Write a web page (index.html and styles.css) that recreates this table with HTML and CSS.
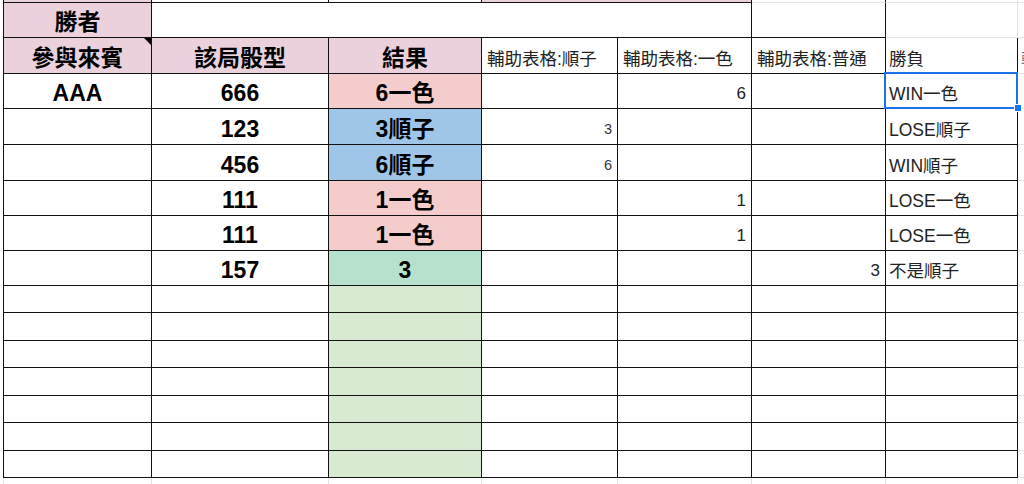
FILE: index.html
```html
<!DOCTYPE html>
<html lang="zh-Hant">
<head>
<meta charset="utf-8">
<title>Sheet</title>
<link rel="stylesheet" href="styles.css">
</head>
<body>
<table class="sheet">
  <colgroup>
    <col class="c1"><col class="c2"><col class="c3"><col class="c4"><col class="c5"><col class="c6"><col class="c7"><col class="c8">
  </colgroup>
  <tr class="r-strip">
    <td class="pk"></td><td></td><td></td><td class="pk" colspan="2"></td><td class="gb"></td><td class="g"></td><td class="g"></td>
  </tr>
  <tr class="r-top">
    <td class="pk b">勝者</td>
    <td colspan="4"></td>
    <td class="gt"></td>
    <td class="g"></td>
    <td class="g"></td>
  </tr>
  <tr class="r-head">
    <td class="pk b note">參與來賓</td>
    <td class="pk b">該局骰型</td>
    <td class="pk b">結果</td>
    <td class="t">輔助表格:順子</td>
    <td class="t">輔助表格:一色</td>
    <td class="t">輔助表格:普通</td>
    <td class="t tw">勝負</td>
    <td class="g t tp">輔助</td>
  </tr>
  <tr class="r-35">
    <td class="b">AAA</td><td class="b">666</td><td class="b rd">6一色</td>
    <td></td><td class="n">6</td><td></td>
    <td class="t tw sel">WIN一色<span class="handle"></span></td><td class="g"></td>
  </tr>
  <tr class="r-36">
    <td></td><td class="b">123</td><td class="b bl">3順子</td>
    <td class="n sm">3</td><td></td><td></td>
    <td class="t tw">LOSE順子</td><td class="g"></td>
  </tr>
  <tr class="r-36">
    <td></td><td class="b">456</td><td class="b bl">6順子</td>
    <td class="n sm">6</td><td></td><td></td>
    <td class="t tw">WIN順子</td><td class="g"></td>
  </tr>
  <tr class="r-35">
    <td></td><td class="b">111</td><td class="b rd">1一色</td>
    <td></td><td class="n">1</td><td></td>
    <td class="t tw">LOSE一色</td><td class="g"></td>
  </tr>
  <tr class="r-35">
    <td></td><td class="b">111</td><td class="b rd">1一色</td>
    <td></td><td class="n">1</td><td></td>
    <td class="t tw">LOSE一色</td><td class="g"></td>
  </tr>
  <tr class="r-35">
    <td></td><td class="b">157</td><td class="b gn">3</td>
    <td></td><td></td><td class="n">3</td>
    <td class="t tw">不是順子</td><td class="g"></td>
  </tr>
  <tr class="r-27"><td></td><td></td><td class="lg"></td><td></td><td></td><td></td><td></td><td class="g"></td></tr>
  <tr class="r-28"><td></td><td></td><td class="lg"></td><td></td><td></td><td></td><td></td><td class="g"></td></tr>
  <tr class="r-27"><td></td><td></td><td class="lg"></td><td></td><td></td><td></td><td></td><td class="g"></td></tr>
  <tr class="r-28"><td></td><td></td><td class="lg"></td><td></td><td></td><td></td><td></td><td class="g"></td></tr>
  <tr class="r-27"><td></td><td></td><td class="lg"></td><td></td><td></td><td></td><td></td><td class="g"></td></tr>
  <tr class="r-28"><td></td><td></td><td class="lg"></td><td></td><td></td><td></td><td></td><td class="g"></td></tr>
  <tr class="r-27"><td></td><td></td><td class="lg"></td><td></td><td></td><td></td><td></td><td class="g"></td></tr>
  <tr class="r-tail"><td class="g"></td><td class="g"></td><td class="g"></td><td class="g"></td><td class="g"></td><td class="g"></td><td class="g"></td><td class="g"></td></tr>
</table>
</body>
</html>
```

FILE: styles.css
```css
html, body {
  margin: 0;
  padding: 0;
  background: #ffffff;
  overflow: hidden;
}

body {
  font-family: "Liberation Sans", "Noto Sans CJK TC", sans-serif;
  color: #222222;
}

.sheet {
  border-collapse: separate;
  border-spacing: 0;
  table-layout: fixed;
  width: 1075px;
  margin-left: 3px;
}

.c1 { width: 149px; }
.c2 { width: 177px; }
.c3 { width: 153px; }
.c4 { width: 136px; }
.c5 { width: 134px; }
.c6 { width: 134px; }
.c7 { width: 132px; }
.c8 { width: 60px; }

.sheet td {
  padding: 0;
  border-right: 1px solid #111111;
  border-bottom: 1px solid #111111;
  white-space: nowrap;
  overflow: hidden;
  vertical-align: bottom;
  font-size: 0;
  line-height: 0;
}

.sheet td:first-child {
  border-left: 1px solid #111111;
}

.r-strip { height: 3px; }
.r-top { height: 35px; }
.r-head { height: 36px; }
.r-35 { height: 35px; }
.r-36 { height: 36px; }
.r-27 { height: 27px; }
.r-28 { height: 28px; }
.r-tail { height: 30px; }

.sheet td.g {
  border-right: 1px solid #e2e3e3;
  border-bottom: 1px solid #e2e3e3;
}

.sheet td.gt {
  border-bottom: 1px solid #111111;
}

.sheet td.gb {
  border-bottom: 1px solid #e2e3e3;
}

.sheet tr.r-tail td {
  border-left: none;
  border-bottom: none;
  border-right: 1px solid #e2e3e3;
}

.sheet tr.r-tail td:first-child {
  border-left: 1px solid #e2e3e3;
}

.pk { background: #ead1dc; }
.rd { background: #f4cccc; }
.bl { background: #9fc5e8; }
.gn { background: #b7e1cd; }
.lg { background: #d9ead3; }

.sheet td.b {
  font-size: 23px;
  line-height: 26px;
  font-weight: bold;
  color: #000000;
  text-align: center;
  padding-bottom: 2px;
}

.sheet td.t {
  font-size: 17.5px;
  line-height: 20px;
  text-align: left;
  padding-left: 5px;
  padding-bottom: 4px;
  color: #222222;
}

.sheet td.tw {
  padding-left: 3px;
}

.sheet td.tp {
  color: #777777;
  padding-left: 3px;
}

.sheet td.n {
  font-size: 17px;
  line-height: 20px;
  text-align: right;
  padding-right: 5px;
  padding-bottom: 4px;
  color: #222222;
}

.sheet td.sm {
  font-size: 14.5px;
  color: #333333;
  padding-bottom: 5px;
}

.note {
  position: relative;
}

.note::after {
  content: "";
  position: absolute;
  top: 0;
  right: 0;
  width: 0;
  height: 0;
  border-top: 7px solid #000000;
  border-left: 7px solid transparent;
}

.sheet td.sel {
  position: relative;
  overflow: visible;
}

.sel::after {
  content: "";
  position: absolute;
  left: -2px;
  top: -2px;
  right: -1px;
  bottom: -1px;
  border: 2px solid #1a73e8;
  pointer-events: none;
}

.handle {
  position: absolute;
  right: -5px;
  bottom: -4px;
  width: 6px;
  height: 6px;
  background: #1a73e8;
  border: 1px solid #ffffff;
  z-index: 2;
}
```
